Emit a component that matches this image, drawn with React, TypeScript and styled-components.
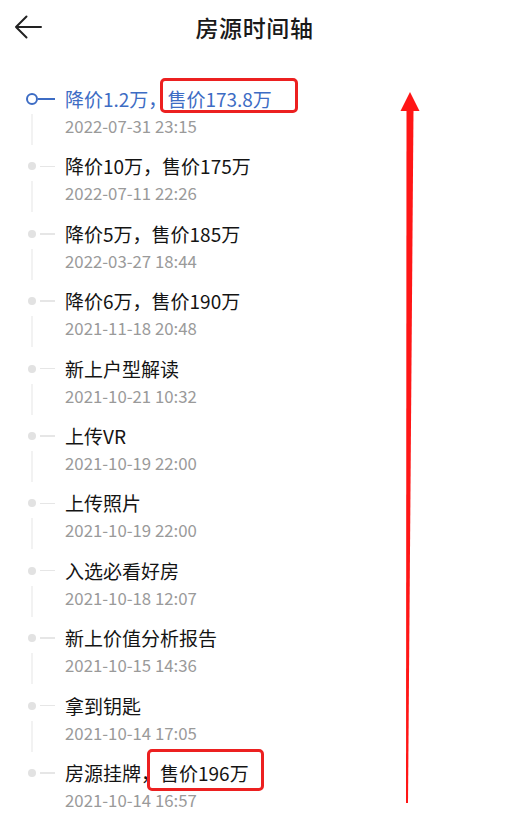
import styled, { createGlobalStyle } from "styled-components";

const GlobalStyle = createGlobalStyle`
  html, body {
    margin: 0;
    padding: 0;
    background: #ffffff;
  }
  body {
    font-family: "Noto Sans CJK SC", "Noto Sans", sans-serif;
    color: #222222;
  }
`;

type TEvent = {
  title: string;
  mark?: string;
  time: string;
};

const events: TEvent[] = [
  { title: "降价1.2万，", mark: "售价173.8万", time: "2022-07-31 23:15" },
  { title: "降价10万，售价175万", time: "2022-07-11 22:26" },
  { title: "降价5万，售价185万", time: "2022-03-27 18:44" },
  { title: "降价6万，售价190万", time: "2021-11-18 20:48" },
  { title: "新上户型解读", time: "2021-10-21 10:32" },
  { title: "上传VR", time: "2021-10-19 22:00" },
  { title: "上传照片", time: "2021-10-19 22:00" },
  { title: "入选必看好房", time: "2021-10-18 12:07" },
  { title: "新上价值分析报告", time: "2021-10-15 14:36" },
  { title: "拿到钥匙", time: "2021-10-14 17:05" },
  { title: "房源挂牌，", mark: "售价196万", time: "2021-10-14 16:57" },
];

const Page = styled.div`
  position: relative;
  width: 509px;
  height: 840px;
  overflow: hidden;
  background: #fff;
`;

const Header = styled.header`
  display: grid;
  grid-template-columns: 56px 1fr 56px;
  align-items: center;
  height: 54px;
`;

const BackButton = styled.button`
  display: flex;
  align-items: center;
  justify-content: flex-start;
  padding: 0 0 0 14px;
  margin: 0;
  height: 100%;
  border: none;
  background: none;
`;

const Title = styled.h1`
  margin: 0;
  text-align: center;
  font-size: 23px;
  font-weight: 500;
  color: #1a1a1a;
  letter-spacing: 0.6px;
`;

const Timeline = styled.ul`
  list-style: none;
  margin: 0;
  padding: 32px 0 0;
`;

const Item = styled.li`
  display: flex;
  padding-bottom: 16.4px;
`;

const Marker = styled.div`
  display: flex;
  flex-direction: column;
  width: 65px;
  flex-shrink: 0;
`;

const Node = styled.div`
  display: flex;
  align-items: center;
  height: 26px;
`;

const Dot = styled.span<{ $active?: boolean }>`
  box-sizing: border-box;
  border-radius: 50%;
  ${(p) =>
    p.$active
      ? `
    width: 12px;
    height: 12px;
    margin-left: 26px;
    border: 2.2px solid #3d6cc4;
    background: #fff;
  `
      : `
    width: 8px;
    height: 8px;
    margin-left: 28px;
    background: #e2e2e2;
  `}
`;

const Dash = styled.span<{ $active?: boolean }>`
  height: ${(p) => (p.$active ? "2px" : "1.5px")};
  width: ${(p) => (p.$active ? "17px" : "15px")};
  margin-left: ${(p) => (p.$active ? "0" : "4px")};
  background: ${(p) => (p.$active ? "#3d6cc4" : "#e6e6e6")};
`;

const Rail = styled.span`
  flex: 1;
  width: 2px;
  margin: 2px 0 -8px 31px;
  background: #f2f2f2;
`;

const Body = styled.div`
  display: flex;
  flex-direction: column;
`;

const EventTitle = styled.div<{ $active?: boolean }>`
  font-size: 19px;
  line-height: 26px;
  color: ${(p) => (p.$active ? "#3d6cc4" : "#141414")};
  white-space: nowrap;
`;

const Time = styled.div`
  margin-top: 3px;
  font-size: 16.8px;
  line-height: 22px;
  color: #9a9a9a;
`;

/* hand-drawn red annotation box laid over the text */
const Mark = styled.span<{ $inset: string }>`
  position: relative;

  &::after {
    content: "";
    position: absolute;
    inset: ${(p) => p.$inset};
    border: 3px solid #ec2020;
    border-radius: 5px;
    pointer-events: none;
  }
`;

const ArrowLayer = styled.svg`
  position: absolute;
  left: 0;
  top: 0;
  pointer-events: none;
`;

const marks = ["-7px -26px -1px -7px", "-10px -15px -5px -13px"];

export default function App() {
  return (
    <Page>
      <GlobalStyle />
      <Header>
        <BackButton aria-label="返回">
          <svg width="28" height="24" viewBox="0 0 28 24" fill="none">
            <path
              d="M27 12H2M12.5 1.5L2 12l10.5 10.5"
              stroke="#222"
              strokeWidth="2"
              strokeLinecap="round"
              strokeLinejoin="round"
            />
          </svg>
        </BackButton>
        <Title>房源时间轴</Title>
        <span />
      </Header>

      <Timeline>
        {events.map((e, i) => {
          const active = i === 0;
          const last = i === events.length - 1;
          return (
            <Item key={i}>
              <Marker>
                <Node>
                  <Dot $active={active} />
                  <Dash $active={active} />
                </Node>
                {!last && <Rail />}
              </Marker>
              <Body>
                <EventTitle $active={active}>
                  {e.title}
                  {e.mark && (
                    <Mark $inset={marks[i === 0 ? 0 : 1]}>{e.mark}</Mark>
                  )}
                </EventTitle>
                <Time>{e.time}</Time>
              </Body>
            </Item>
          );
        })}
      </Timeline>

      <ArrowLayer width="509" height="840" viewBox="0 0 509 840">
        <polygon points="410,92 419.5,111 400.5,111" fill="#ff1616" />
        <polygon points="406.5,110 413.5,110 408,803 406,803" fill="#ff1616" />
      </ArrowLayer>
    </Page>
  );
}
